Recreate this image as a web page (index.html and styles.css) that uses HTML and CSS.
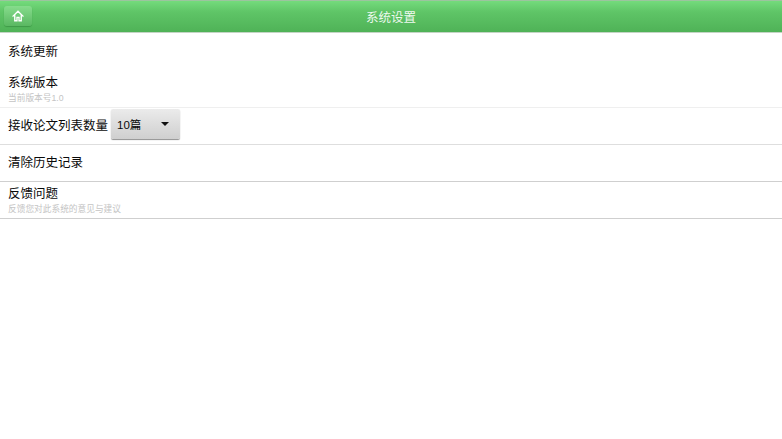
FILE: index.html
```html
<!DOCTYPE html>
<html lang="zh-CN">

    <head>
        <meta charset="UTF-8">
        <meta name="viewport" content="width=device-width, initial-scale=1.0">
        <title>系统设置</title>
        <link rel="stylesheet" href="styles.css">
    </head>

    <body>
        <div class="header">
            <button class="home-btn">
                <svg width="12" height="12" viewBox="0 0 13 13">
                    <path d="M6.5 1.4 L11.6 6.4 L10 6.4 L10 11.6 L7.6 11.6 L7.6 8 L5.4 8 L5.4 11.6 L3 11.6 L3 6.4 L1.4 6.4 Z" fill="none" stroke="#fff" stroke-width="1.5"/>
                </svg>
            </button>
            <div class="title">系统设置</div>
        </div>

        <div class="list">
            <div class="item item-update">系统更新</div>
            <div class="item item-version">
                <div class="name">系统版本</div>
                <div class="sub">当前版本号1.0</div>
            </div>
            <div class="item item-count">
                <span>接收论文列表数量</span>
                <div class="select">
                    <span>10篇</span>
                    <i class="arrow"></i>
                </div>
            </div>
            <div class="item item-clear">清除历史记录</div>
            <div class="item item-feedback">
                <div class="name">反馈问题</div>
                <div class="sub">反馈您对此系统的意见与建议</div>
            </div>
        </div>
    </body>

</html>
```

FILE: styles.css
```css
body {
    margin: 0;
    padding: 0;
    background-color: #fff;
    color: #0a0a0a;
    font-family: "Liberation Sans", "Noto Sans CJK SC", sans-serif;
    font-size: 12.5px;
}

.header {
    height: 31px;
    border-top: 1px solid #9cc49f;
    border-bottom: 1px solid #c4d4c5;
    background: linear-gradient(#74db7c, #5fc567 35%, #4fb257);
    position: relative;
    display: flex;
    align-items: center;
    justify-content: center;
}

.home-btn {
    position: absolute;
    left: 4px;
    top: 5px;
    width: 28px;
    height: 20px;
    padding: 0;
    border: 0;
    border-radius: 3px;
    background: linear-gradient(#86dc8c, #5ab862);
    box-shadow: 0 1px 1px #3f9a47;
    display: flex;
    align-items: center;
    justify-content: center;
}

.title {
    color: #eef9ef;
    font-size: 12.5px;
}

.item {
    display: flex;
    align-items: center;
    padding-left: 8px;
    box-sizing: border-box;
}

.item-update {
    height: 37px;
    padding-bottom: 2px;
}

.item-version,
.item-feedback {
    flex-direction: column;
    align-items: flex-start;
}

.item-version {
    height: 38px;
    padding-top: 6px;
    border-bottom: 1px solid #efefef;
}

.item-count {
    height: 37px;
    padding-bottom: 4px;
    border-bottom: 1px solid #dedede;
}

.item-clear {
    height: 37px;
    padding-bottom: 4px;
    border-bottom: 1px solid #cfcfcf;
}

.item-feedback {
    height: 37px;
    padding-top: 5px;
    border-bottom: 1px solid #cfcfcf;
}

.name {
    line-height: 14px;
}

.sub {
    margin-top: 3px;
    font-size: 8.7px;
    line-height: 11px;
    color: #c4c4c4;
}

.select {
    width: 69px;
    height: 30px;
    margin-left: 3px;
    padding: 0 11px 0 6px;
    box-sizing: border-box;
    display: flex;
    align-items: center;
    justify-content: space-between;
    font-size: 11.5px;
    border-radius: 2px;
    background: linear-gradient(#ebebeb, #cfcfcf);
    box-shadow: 0 1px 1px #8f8f8f;
}

.arrow {
    width: 0;
    height: 0;
    border-left: 4.5px solid transparent;
    border-right: 4.5px solid transparent;
    border-top: 4.5px solid #111;
}
```
